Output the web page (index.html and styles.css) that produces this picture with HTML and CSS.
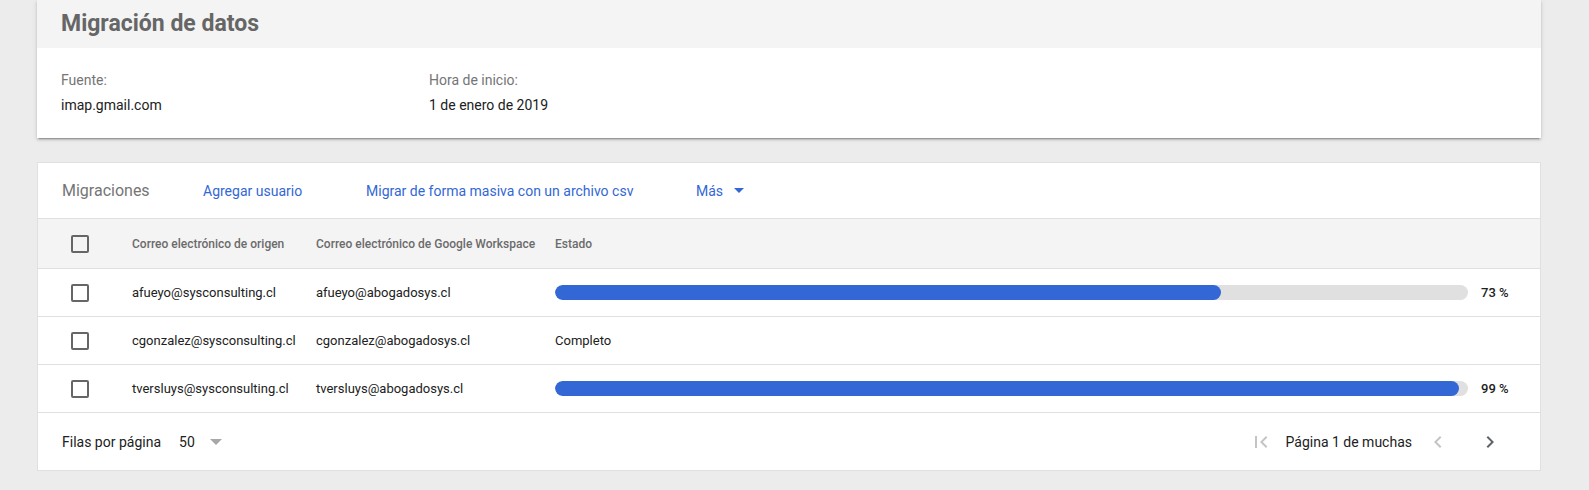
FILE: index.html
```html
<!DOCTYPE html>
<html lang="es">
<head>
<meta charset="utf-8">
<title>Migración de datos</title>
<link rel="stylesheet" href="styles.css">
</head>
<body>
<div class="page">
  <section class="card summary">
    <header class="summary-head">Migración de datos</header>
    <div class="summary-body">
      <div class="field">
        <div class="label">Fuente:</div>
        <div class="value">imap.gmail.com</div>
      </div>
      <div class="field">
        <div class="label">Hora de inicio:</div>
        <div class="value">1 de enero de 2019</div>
      </div>
    </div>
  </section>

  <section class="card table-card">
    <div class="toolbar">
      <span class="toolbar-title">Migraciones</span>
      <a class="link link-add">Agregar usuario</a>
      <a class="link link-csv">Migrar de forma masiva con un archivo csv</a>
      <a class="link link-more">Más <svg class="caret" width="10" height="5" viewBox="0 0 10 5"><path d="M0 0h10L5 5z" fill="#3367d6"/></svg></a>
    </div>

    <div class="row head-row">
      <div class="cell cb-cell"><span class="checkbox"></span></div>
      <div class="cell">Correo electrónico de origen</div>
      <div class="cell">Correo electrónico de Google Workspace</div>
      <div class="cell">Estado</div>
    </div>

    <div class="row data-row">
      <div class="cell cb-cell"><span class="checkbox"></span></div>
      <div class="cell">afueyo@sysconsulting.cl</div>
      <div class="cell">afueyo@abogadosys.cl</div>
      <div class="cell status">
        <div class="bar"><div class="fill" style="width:73%"></div></div>
        <span class="pct">73 %</span>
      </div>
    </div>

    <div class="row data-row">
      <div class="cell cb-cell"><span class="checkbox"></span></div>
      <div class="cell">cgonzalez@sysconsulting.cl</div>
      <div class="cell">cgonzalez@abogadosys.cl</div>
      <div class="cell status">Completo</div>
    </div>

    <div class="row data-row">
      <div class="cell cb-cell"><span class="checkbox"></span></div>
      <div class="cell">tversluys@sysconsulting.cl</div>
      <div class="cell">tversluys@abogadosys.cl</div>
      <div class="cell status">
        <div class="bar"><div class="fill" style="width:99%"></div></div>
        <span class="pct">99 %</span>
      </div>
    </div>

    <div class="footer">
      <div class="rows-per-page">
        <span>Filas por página</span>
        <span class="rpp-value">50</span>
        <svg class="caret-gray" width="12" height="6" viewBox="0 0 12 6"><path d="M0 0h12L6 6z" fill="#a8a8a8"/></svg>
      </div>
      <div class="pager">
        <svg class="icon icon-first" width="24" height="24" viewBox="0 0 24 24"><path d="M18.41 16.59L13.82 12l4.59-4.59L17 6l-6 6 6 6zM6 6h2v12H6z" fill="#c4c4c4"/></svg>
        <span class="page-text">Página 1 de muchas</span>
        <svg class="icon icon-prev" width="24" height="24" viewBox="0 0 24 24"><path d="M15.41 7.41L14 6l-6 6 6 6 1.41-1.41L10.83 12z" fill="#c4c4c4"/></svg>
        <svg class="icon icon-next" width="24" height="24" viewBox="0 0 24 24"><path d="M10 6L8.59 7.41 13.17 12l-4.58 4.59L10 18l6-6z" fill="#5f6368"/></svg>
      </div>
    </div>
  </section>
</div>
</body>
</html>
```

FILE: styles.css
```css
* { box-sizing: border-box; }

html, body {
  margin: 0;
  padding: 0;
  background: #ececec;
  font-family: Roboto, "Liberation Sans", Arial, sans-serif;
  color: #212121;
}

.page {
  width: 1504px;
  margin: 0 0 0 37px;
  padding-bottom: 20px;
  display: flex;
  flex-direction: column;
  gap: 24px;
}

.card {
  background: #fff;
}

/* Summary card */
.summary {
  box-shadow: 0 2px 2px 0 rgba(0,0,0,.14), 0 1px 5px 0 rgba(0,0,0,.12), 0 3px 1px -2px rgba(0,0,0,.2);
}

.summary-head {
  height: 48px;
  background: #f4f4f4;
  padding: 10px 24px 0;
  font-size: 23px;
  line-height: 28px;
  font-weight: 700;
  color: #666;
}

.summary-body {
  display: grid;
  grid-template-columns: 368px 1fr;
  padding: 20px 24px 21px;
  font-size: 14px;
}

.label {
  line-height: 24px;
  color: #757575;
}

.value {
  line-height: 24px;
  margin-top: 1px;
  color: #212121;
}

/* Table card */
.table-card {
  border: 1px solid #e0e0e0;
}

.toolbar {
  height: 56px;
  display: flex;
  align-items: center;
  padding: 0 24px;
  border-bottom: 1px solid #e0e0e0;
}

.toolbar-title {
  font-size: 16px;
  color: #757575;
  line-height: 24px;
  width: 141px;
}

.link {
  font-size: 14px;
  color: #3367d6;
  line-height: 24px;
  cursor: pointer;
  text-decoration: none;
}

.link-add { width: 163px; }
.link-csv { width: 330px; }

.link-more {
  display: flex;
  align-items: center;
}

.caret {
  margin-left: 11px;
}

.row {
  display: grid;
  grid-template-columns: 94px 184px 239px 1fr;
  align-items: center;
  border-bottom: 1px solid #e0e0e0;
}

.head-row {
  height: 50px;
  background: #f4f4f4;
  font-size: 12px;
  font-weight: 500;
  color: #6b6b6b;
}

.data-row {
  height: 48px;
  font-size: 13px;
  color: #212121;
}

.cb-cell {
  padding-left: 33px;
  display: flex;
  align-items: center;
}

.checkbox {
  display: block;
  width: 18px;
  height: 18px;
  border: 2px solid #666;
  border-radius: 2px;
}

.status {
  display: flex;
  align-items: center;
}

.bar {
  flex: 1;
  height: 15px;
  background: #e0e0e0;
  border-radius: 8px;
  overflow: hidden;
}

.fill {
  height: 100%;
  background: #3367d6;
  border-radius: 8px;
}

.pct {
  width: 72px;
  padding-left: 13px;
  font-size: 13px;
  font-weight: 500;
  color: #212121;
}

.footer {
  height: 57px;
  display: flex;
  align-items: center;
  justify-content: space-between;
  padding: 0 38px 0 24px;
  font-size: 14px;
}

.rows-per-page {
  display: flex;
  align-items: center;
  line-height: 20px;
}

.rpp-value {
  margin-left: 18px;
}

.caret-gray {
  margin-left: 15px;
}

.pager {
  display: flex;
  align-items: center;
}

.icon { display: block; }

.page-text {
  margin-left: 13px;
  line-height: 20px;
}

.icon-prev { margin-left: 14px; }
.icon-next { margin-left: 28px; }
```
